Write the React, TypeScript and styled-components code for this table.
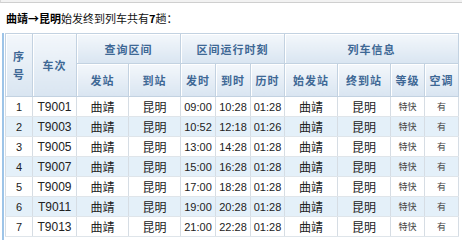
import React from 'react';
import styled, { createGlobalStyle } from 'styled-components';

interface Train {
  no: string;
  depart: string;
  arrive: string;
  duration: string;
}

const trains: Train[] = [
  { no: 'T9001', depart: '09:00', arrive: '10:28', duration: '01:28' },
  { no: 'T9003', depart: '10:52', arrive: '12:18', duration: '01:26' },
  { no: 'T9005', depart: '13:00', arrive: '14:28', duration: '01:28' },
  { no: 'T9007', depart: '15:00', arrive: '16:28', duration: '01:28' },
  { no: 'T9009', depart: '17:00', arrive: '18:28', duration: '01:28' },
  { no: 'T9011', depart: '19:00', arrive: '20:28', duration: '01:28' },
  { no: 'T9013', depart: '21:00', arrive: '22:28', duration: '01:28' },
];

const colWidths = [27, 44, 52, 52, 35, 35, 34, 53, 53, 34, 34];

const App: React.FC = () => {
  return (
    <Page>
      <GlobalStyle />
      <TopStrip />
      <Title>
        <strong>曲靖→昆明</strong>始发终到列车共有<strong>7</strong>趟：
      </Title>
      <TableWrap>
        <Table>
          <colgroup>
            {colWidths.map((w, i) => (
              <col key={i} style={{ width: w }} />
            ))}
          </colgroup>
          <thead>
            <HeadRow $height={30}>
              <Th rowSpan={2}>
                序<br />号
              </Th>
              <Th rowSpan={2}>车次</Th>
              <Th colSpan={2}>查询区间</Th>
              <Th colSpan={3}>区间运行时刻</Th>
              <Th colSpan={4}>列车信息</Th>
            </HeadRow>
            <HeadRow $height={33}>
              <Th>发站</Th>
              <Th>到站</Th>
              <Th>发时</Th>
              <Th>到时</Th>
              <Th>历时</Th>
              <Th>始发站</Th>
              <Th>终到站</Th>
              <Th>等级</Th>
              <Th>空调</Th>
            </HeadRow>
          </thead>
          <tbody>
            {trains.map((t, idx) => (
              <Row key={t.no} $alt={idx % 2 === 1}>
                <Td $font="num">{idx + 1}</Td>
                <Td $font="code">{t.no}</Td>
                <Td>曲靖</Td>
                <Td>昆明</Td>
                <Td $font="num">{t.depart}</Td>
                <Td $font="num">{t.arrive}</Td>
                <Td $font="num">{t.duration}</Td>
                <Td>曲靖</Td>
                <Td>昆明</Td>
                <Td $font="small">特快</Td>
                <Td $font="small">有</Td>
              </Row>
            ))}
          </tbody>
        </Table>
      </TableWrap>
    </Page>
  );
};

const GlobalStyle = createGlobalStyle`
  html, body {
    margin: 0;
    padding: 0;
    background: #ffffff;
  }
`;

const Page = styled.div`
  width: 462px;
  height: 240px;
  overflow: hidden;
  font-family: "Noto Sans CJK SC", sans-serif;
  color: #222;
`;

const TopStrip = styled.div`
  height: 2px;
  background: #f2f2f2;
  border-bottom: 1px solid #cfcfcf;
  border-left: 1px solid #d8d8d8;
`;

const Title = styled.div`
  height: 30px;
  padding-left: 6px;
  display: flex;
  align-items: center;
  font-size: 11px;
  color: #111;
  white-space: nowrap;

  strong {
    font-weight: bold;
    color: #000;
  }
`;

const TableWrap = styled.div`
  margin-left: 2px;
  border-left: 2px solid #9dc4e8;
  padding-left: 1px;
  height: 210px;
`;

const Table = styled.table`
  width: 454px;
  table-layout: fixed;
  border-collapse: collapse;
  border: 1px solid #bccbd9;
`;

const HeadRow = styled.tr<{ $height: number }>`
  height: ${(p) => p.$height}px;
`;

const Th = styled.th`
  padding: 0;
  border: 1px solid #c3d2e1;
  background: linear-gradient(#f3f7fb, #d9e5f1);
  box-shadow: inset 1px 1px 0 #ffffff;
  color: #3e6895;
  font-size: 11px;
  font-weight: bold;
  letter-spacing: 1px;
  line-height: 18px;
  text-align: center;
  vertical-align: middle;
`;

const Row = styled.tr<{ $alt: boolean }>`
  height: 20px;
  background: ${(p) => (p.$alt ? '#e4f0f9' : '#ffffff')};
`;

const Td = styled.td<{ $font?: 'num' | 'code' | 'small' }>`
  padding: 0;
  border-left: 1px solid #d6dde4;
  border-right: 1px solid #d6dde4;
  border-bottom: 1px solid #dfe5ea;
  text-align: center;
  vertical-align: middle;
  white-space: nowrap;
  font-family: ${(p) =>
    p.$font === 'num' || p.$font === 'code'
      ? '"Liberation Sans", Arial, sans-serif'
      : '"Noto Sans CJK SC", sans-serif'};
  font-size: ${(p) =>
    p.$font === 'num' ? '11px' : p.$font === 'code' ? '12px' : p.$font === 'small' ? '9px' : '12px'};
  color: ${(p) => (p.$font === 'small' ? '#444' : '#222')};
`;

export default App;
